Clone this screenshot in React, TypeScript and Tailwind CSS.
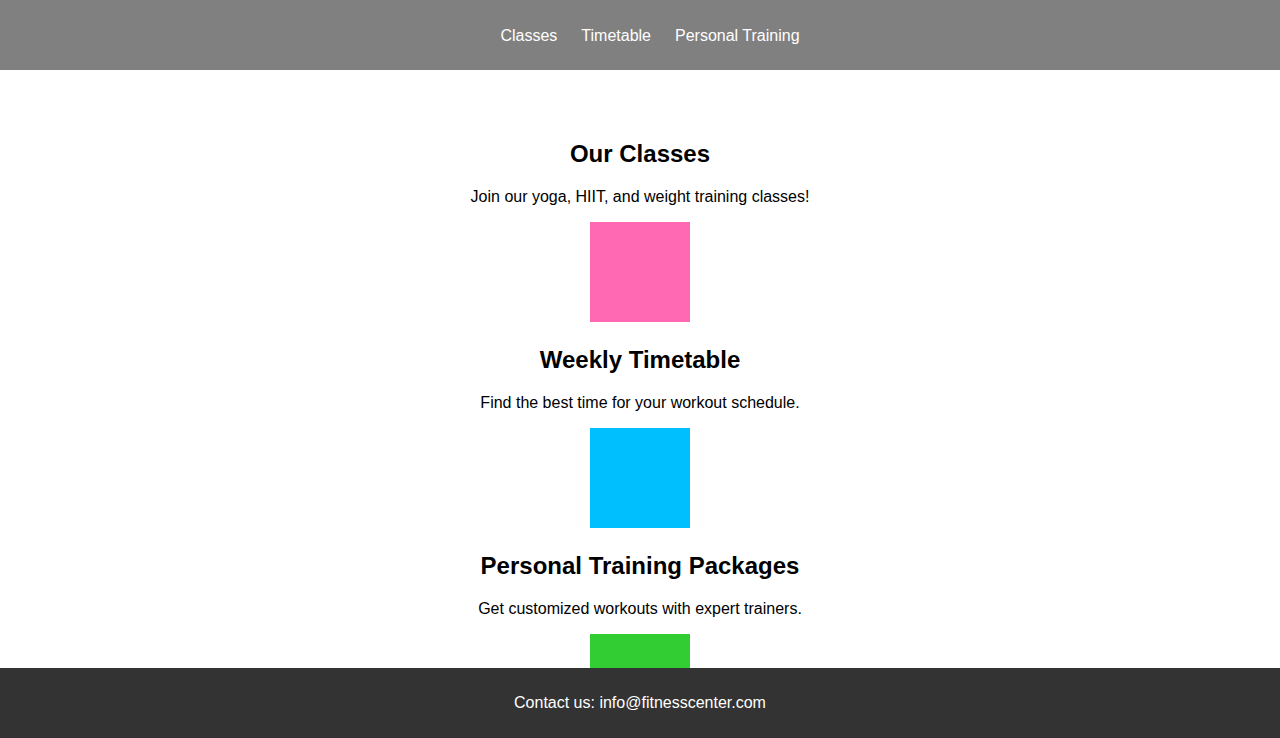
const sections = [
  {
    title: 'Our Classes',
    text: 'Join our yoga, HIIT, and weight training classes!',
    color: 'bg-[#ff69b4]',
  },
  {
    title: 'Weekly Timetable',
    text: 'Find the best time for your workout schedule.',
    color: 'bg-[#00bfff]',
  },
  {
    title: 'Personal Training Packages',
    text: 'Get customized workouts with expert trainers.',
    color: 'bg-[#32cd32]',
  },
]

export default function App() {
  return (
    <div className="min-h-screen bg-white font-['Liberation_Sans',Arial,sans-serif] text-black">
      {/* Header */}
      <header className="flex h-[70px] items-center justify-center bg-[#808080]">
        <nav className="flex gap-6 pt-[2px] pl-[20px] text-base leading-[18px] text-white">
          <a href="#classes">Classes</a>
          <a href="#timetable">Timetable</a>
          <a href="#training">Personal Training</a>
        </nav>
      </header>

      {/* Sections */}
      <main className="flex flex-col items-center pt-[70px] pb-[90px]">
        {sections.map((s) => (
          <section key={s.title} className="mb-6 flex flex-col items-center text-center">
            <h2 className="text-2xl leading-[27.6px] font-bold">{s.title}</h2>
            <p className="mt-5 text-base leading-[18.4px]">{s.text}</p>
            <div className={`mt-4 h-[100px] w-[100px] ${s.color}`} />
          </section>
        ))}
      </main>

      {/* Footer */}
      <footer className="fixed inset-x-0 bottom-0 flex h-[70px] items-center justify-center bg-[#333333] text-base text-white">
        Contact us: info@fitnesscenter.com
      </footer>
    </div>
  )
}
